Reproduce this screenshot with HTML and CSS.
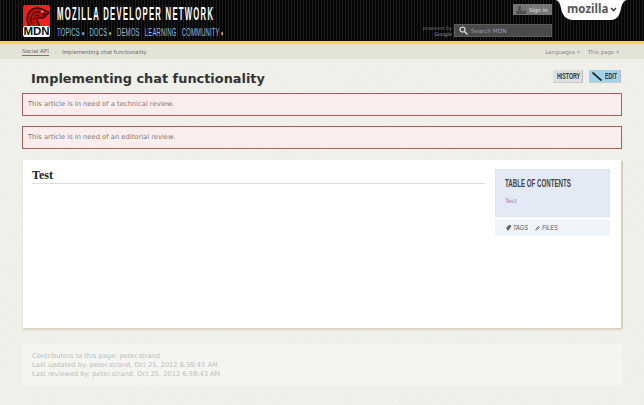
FILE: index.html
```html
<!DOCTYPE html>
<html lang="en">
<head>
<meta charset="utf-8">
<title>Implementing chat functionality</title>
<link rel="stylesheet" href="styles.css">
</head>
<body>
<header class="masthead">
  <div class="logo">
    <svg class="logo-art" width="27" height="32" viewBox="0 0 27 32">
      <rect x="0" y="0" width="27" height="22" rx="2" fill="#e8241f"/>
      <path d="M6 21 C3 15 4 9 8 5 C12 2 17 2.500 20 4.500 L25.500 7 L25 9 L20 9.500 L23 11 L20 13 L16 12.500 C13.500 13 14 16 15.500 18 L16.500 21" fill="#b5130f" stroke="#2c0604" stroke-width="1.300" stroke-linejoin="round"/>
      <path d="M9 19 C7 15 8 10 11 8 C13 6.500 15 6.500 17 7.500 M12 11 L16 10 M10 14 L13 13" fill="none" stroke="#2c0604" stroke-width="1"/>
      <path d="M18 5.500 L20.500 6.500 L18.800 7.500 Z" fill="#fff"/>
      <rect x="0" y="21" width="27" height="11" rx="2" fill="#fff"/>
    </svg>
    <span class="logo-mark">MDN</span>
  </div>
  <div class="brand">
    <div class="brand-name">MOZILLA DEVELOPER NETWORK</div>
    <nav class="main-nav">
      <span>TOPICS <i class="caret">▾</i></span>
      <span>DOCS <i class="caret">▾</i></span>
      <span>DEMOS</span>
      <span>LEARNING</span>
      <span>COMMUNITY <i class="caret">▾</i></span>
    </nav>
  </div>
  <div class="tools">
    <a class="signin">
      <svg width="13" height="9" viewBox="0 0 13 9"><path d="M1 9 V7 C1 6 3 5.500 3.500 5 C2.500 4 2.500 1 4.500 1 C6.500 1 6.500 4 5.500 5 C6 5.500 8 6 8 7 L11 4.500 V9 Z" fill="#4f4f4f"/></svg>
      Sign in
    </a>
    <div class="search-row">
      <div class="powered">powered by<br><b>Google</b></div>
      <div class="search">
        <svg width="9" height="9" viewBox="0 0 9 9"><circle cx="3.500" cy="3.500" r="2.500" fill="none" stroke="#ddd" stroke-width="1.200"/><path d="M5.500 5.500 L8.500 8.500" stroke="#ddd" stroke-width="1.400"/></svg>
        <span>Search MDN</span>
      </div>
    </div>
  </div>
  <div class="moz-tab">
    <svg class="moz-shape" width="72" height="20" viewBox="0 0 72 20"><path d="M0 0 C4 0 5 4 6 8 C7 15 11 20 18 20 H56 C62 20 65 15 66 8 C67 4 69 0 72 0 Z" fill="#fff"/></svg>
    <span class="moz-word">mozilla</span>
    <svg class="moz-chevron" width="7" height="5" viewBox="0 0 7 5"><path d="M1 1 L3.500 3.500 L6 1" fill="none" stroke="#444" stroke-width="1.600"/></svg>
  </div>
</header>
<div class="crumbs">
  <div class="crumb-path"><a class="crumb-link">Social API</a><span class="crumb-sep">›</span><span>Implementing chat functionality</span></div>
  <div class="crumb-tools"><span>Languages <i class="caret-s">▾</i></span><span>This page <i class="caret-s">▾</i></span></div>
</div>
<main class="page">
  <div class="title-row">
    <h1>Implementing chat functionality</h1>
    <div class="actions">
      <a class="btn btn-history"><span class="narrow">HISTORY</span></a>
      <a class="btn btn-edit"><svg class="edit-icon" width="10" height="9" viewBox="0 0 10 9"><path d="M0.500 0.500 L9.500 8.500" stroke="#222" stroke-width="1.700"/></svg><span class="narrow">EDIT</span></a>
    </div>
  </div>
  <div class="notice">This article is in need of a technical review.</div>
  <div class="notice">This article is in need of an editorial review.</div>
  <section class="article">
    <div class="content">
      <h2>Test</h2>
    </div>
    <aside class="side">
      <div class="toc">
        <h3>TABLE OF CONTENTS</h3>
        <a class="toc-link">Test</a>
      </div>
      <div class="meta-tabs">
        <span class="meta-tab"><svg width="5" height="6" viewBox="0 0 5 6"><path d="M0 3 L3 0 H5 V2 L2 6 Z" fill="#666"/></svg><em>TAGS</em></span>
        <span class="meta-tab"><svg width="5" height="6" viewBox="0 0 5 6"><path d="M0.500 4.500 L4 1 M1 5.500 L4.500 2" stroke="#777" fill="none"/></svg><em>FILES</em></span>
      </div>
    </aside>
  </section>
  <footer class="contrib">
    <div>Contributors to this page: peter.strand</div>
    <div>Last updated by: peter.strand, Oct 25, 2012 6:59:43 AM</div>
    <div>Last reviewed by: peter.strand, Oct 25, 2012 6:59:43 AM</div>
  </footer>
</main>
</body>
</html>
```
FILE: styles.css
```css
* { box-sizing: border-box; }
html, body { margin: 0; padding: 0; }
body {
  width: 644px;
  height: 405px;
  overflow: hidden;
  background-color: #f0f0ea;
  background-image:
    repeating-linear-gradient(45deg, rgba(255,255,255,.1) 0 1px, transparent 1px 3px),
    repeating-linear-gradient(-45deg, rgba(200,200,190,.05) 0 1px, transparent 1px 4px);
  font-family: "DejaVu Sans", sans-serif;
  color: #555;
}
.masthead {
  position: relative;
  display: flex;
  height: 44px;
  padding: 5px 0 0 23px;
  background-color: #050505;
  background-image: repeating-linear-gradient(90deg, #1b1b1b 0 1px, #050505 1px 3px);
  border-bottom: 3px solid #f7cd70;
}
.logo {
  position: relative;
  width: 27px;
  height: 32px;
  flex: none;
}
.logo-art { display: block; width: 27px; height: 32px; }
.logo-mark {
  position: absolute;
  left: 0;
  right: 0;
  top: 21px;
  text-align: center;
  font: bold 11.500px/11px "Liberation Sans", sans-serif;
  color: #111;
}
.brand { margin-left: 7px; flex: none; width: 170px; }
.brand-name {
  width: 380px;
  font: bold 18px/18px "Liberation Sans", sans-serif;
  color: #fff;
  letter-spacing: 3px;
  white-space: nowrap;
  transform: scaleX(0.427);
  transform-origin: left top;
}
.main-nav {
  display: flex;
  gap: 9px;
  width: 300px;
  margin-top: 4px;
  font: 10px/12px "Liberation Sans", sans-serif;
  color: #86bfe4;
  white-space: nowrap;
  letter-spacing: 0.300px;
  transform: scaleX(0.59);
  transform-origin: left top;
}
.caret { font-style: normal; font-size: 7px; color: #ddd; }
.tools {
  position: absolute;
  right: 92px;
  top: 4px;
  width: 140px;
  display: flex;
  flex-direction: column;
  align-items: flex-end;
}
.signin {
  display: flex;
  align-items: center;
  gap: 1px;
  width: 39px;
  height: 11px;
  padding-left: 2px;
  background: #757575;
  color: #e2e2e2;
  font-size: 5.500px;
  white-space: nowrap;
}
.search-row { display: flex; align-items: center; gap: 2px; margin-top: 9px; }
.powered {
  font-size: 5px;
  line-height: 6px;
  color: #777;
  text-align: right;
  white-space: nowrap;
}
.powered b { font-weight: normal; color: #999; }
.search {
  display: flex;
  align-items: center;
  gap: 3px;
  width: 98px;
  height: 13px;
  padding-left: 4px;
  background: #4a4a4a;
  border: 1px solid #5d5d5d;
  color: #9a9aa8;
  font-size: 5.800px;
}
.moz-tab {
  position: absolute;
  top: 0;
  left: 555px;
  width: 72px;
  height: 20px;
}
.moz-shape { position: absolute; left: 0; top: 0; }
.moz-word {
  position: absolute;
  left: 12px;
  top: 1px;
  font: bold 11.500px/15px "Open Sans", "DejaVu Sans", sans-serif;
  color: #555;
}
.moz-chevron { position: absolute; left: 55px; top: 7px; }
.crumbs {
  display: flex;
  align-items: center;
  justify-content: space-between;
  height: 15px;
  padding: 0 25px 0 22px;
  background: #e3e3d8;
  font-size: 5.300px;
  color: #666;
}
.crumb-path, .crumb-tools { display: flex; align-items: center; }
.crumb-link { border-bottom: 1px solid #777; line-height: 7px; font-size: 5.500px; }
.crumb-sep { margin: 0 5px 0 6px; color: #999; }
.crumb-tools { gap: 8px; color: #888; font-size: 5.500px; }
.caret-s { font-style: normal; color: #aaa; }
.page { padding: 0 22px; }
.title-row {
  display: flex;
  align-items: flex-start;
  justify-content: space-between;
  height: 34px;
  padding: 11px 1px 0 9px;
}
h1 {
  margin: 0;
  font: bold 12.900px/18px "DejaVu Sans", sans-serif;
  color: #333;
  white-space: nowrap;
}
.actions { display: flex; gap: 6px; }
.btn {
  display: flex;
  align-items: center;
  height: 13px;
  background: #dedede;
  border-right: 1px solid #bbb;
  border-bottom: 1px solid #ccc;
  overflow: hidden;
  color: #333;
}
.btn-history { width: 30px; padding-left: 4px; }
.btn-edit { width: 32px; padding-left: 3px; background: #a3d2ec; }
.edit-icon { flex: none; }
.narrow {
  display: inline-block;
  width: 40px;
  flex: none;
  font: bold 8.500px/12px "Liberation Sans", sans-serif;
  transform: scaleX(0.62);
  transform-origin: left center;
}
.btn-edit .narrow { margin-left: 3px; }
.notice {
  height: 23px;
  margin-bottom: 10px;
  padding: 0 5px;
  background: #fbeded;
  border: 1px solid #a95d5d;
  font-size: 6.750px;
  line-height: 21px;
  color: #7f7a72;
}
.article {
  display: flex;
  justify-content: space-between;
  height: 168px;
  margin: 11px 1px 0;
  padding: 9px 11px 0 9px;
  background: #fff;
  box-shadow: 2px 1px 0 #d6d0bb, 0 2px 2px #d7d3c2;
}
.content { width: 453px; margin-top: -1px; }
h2 {
  margin: 0;
  height: 16px;
  font: bold 12px/14px "Liberation Serif", serif;
  color: #222;
  border-bottom: 1px solid #ddd;
}
.side { width: 115px; }
.toc {
  height: 48px;
  padding: 8px 9px 0;
  background: #e3eaf6;
  border: 1px solid #dfe5f0;
}
h3 {
  width: 130px;
  margin: 0;
  font: bold 11px/11px "Liberation Sans", sans-serif;
  color: #444;
  white-space: nowrap;
  transform: scaleX(0.56);
  transform-origin: left top;
}
.toc-link {
  display: block;
  margin-top: 8px;
  font-size: 6px;
  line-height: 8px;
  color: #7f8cb5;
}
.meta-tabs {
  display: flex;
  height: 16px;
  margin-top: 3px;
  padding: 0 0 0 11px;
  align-items: center;
  background: #eff4f9;
}
.meta-tab { display: flex; align-items: center; width: 29px; gap: 2px; flex: none; }
.meta-tab em {
  display: inline-block;
  width: 14px;
  flex: none;
  font: italic 7.500px/10px "Liberation Sans", sans-serif;
  color: #555;
  transform: scaleX(0.75);
  transform-origin: left center;
}
.contrib {
  height: 42px;
  margin-top: 16px;
  padding: 8px 10px 0;
  background: #f4f5f1;
  font-size: 6.650px;
  line-height: 9px;
  color: #bcbcbc;
}
```
